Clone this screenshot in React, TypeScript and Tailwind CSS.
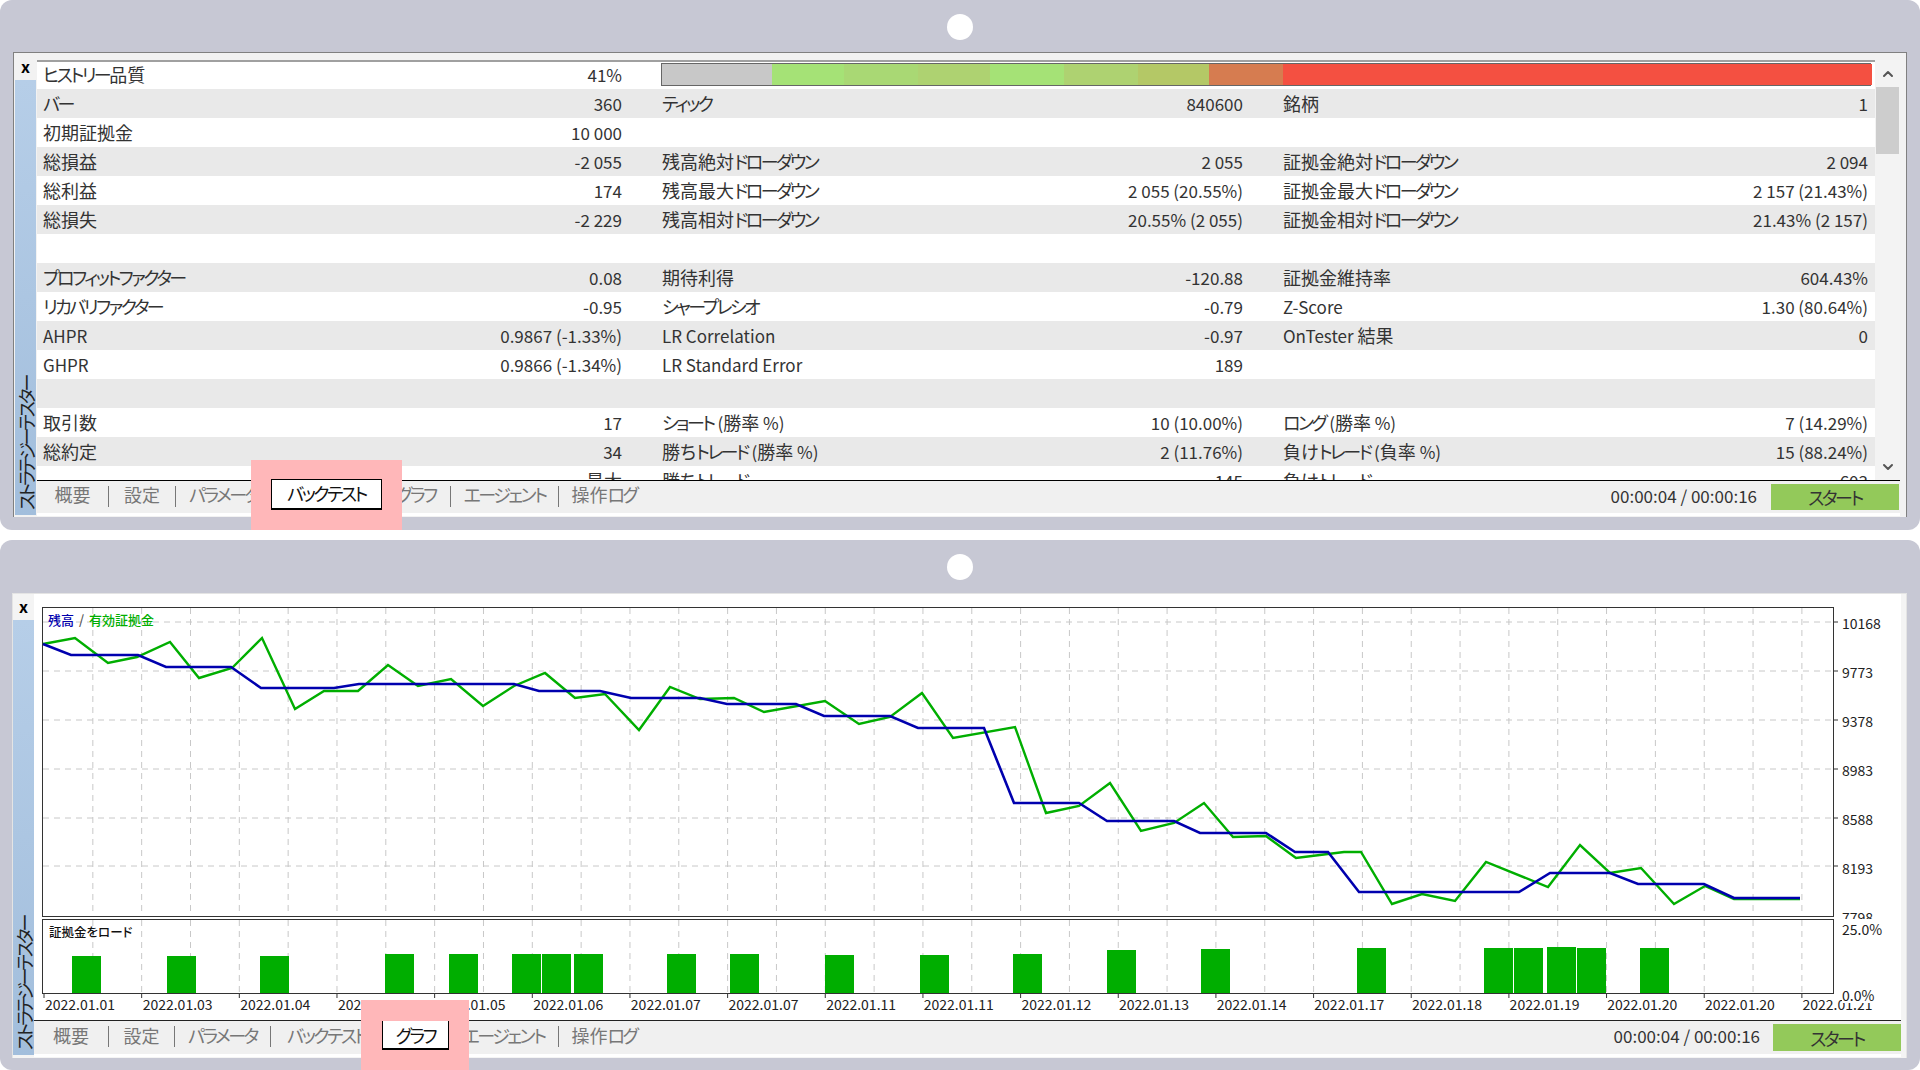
import { ChevronDown, ChevronUp } from "lucide-react";

const rows = [
  ["バー", "360", "ティック", "840600", "銘柄", "1"],
  ["初期証拠金", "10 000", "", "", "", ""],
  ["総損益", "-2 055", "残高絶対ドローダウン", "2 055", "証拠金絶対ドローダウン", "2 094"],
  ["総利益", "174", "残高最大ドローダウン", "2 055 (20.55%)", "証拠金最大ドローダウン", "2 157 (21.43%)"],
  ["総損失", "-2 229", "残高相対ドローダウン", "20.55% (2 055)", "証拠金相対ドローダウン", "21.43% (2 157)"],
  ["", "", "", "", "", ""],
  ["プロフィットファクター", "0.08", "期待利得", "-120.88", "証拠金維持率", "604.43%"],
  ["リカバリファクター", "-0.95", "シャープレシオ", "-0.79", "Z-Score", "1.30 (80.64%)"],
  ["AHPR", "0.9867 (-1.33%)", "LR Correlation", "-0.97", "OnTester 結果", "0"],
  ["GHPR", "0.9866 (-1.34%)", "LR Standard Error", "189", "", ""],
  ["", "", "", "", "", ""],
  ["取引数", "17", "ショート (勝率 %)", "10 (10.00%)", "ロング (勝率 %)", "7 (14.29%)"],
  ["総約定", "34", "勝ちトレード (勝率 %)", "2 (11.76%)", "負けトレード (負率 %)", "15 (88.24%)"],
  ["", "最大", "勝ちトレード", "145", "負けトレード", "603"],
];

const barSegments = [
  { width: 110, color: "bg-[#c8c8c8]" },
  { width: 72, color: "bg-[#a5e276]" },
  { width: 74, color: "bg-[#a9d874]" },
  { width: 72, color: "bg-[#aed271]" },
  { width: 74, color: "bg-[#a5e276]" },
  { width: 74, color: "bg-[#aed271]" },
  { width: 71, color: "bg-[#b4c866]" },
  { width: 74, color: "bg-[#d67c50]" },
  { width: 589, color: "bg-[#f45041]" },
];

const priceLabels = ["10168", "9773", "9378", "8983", "8588", "8193", "7798"];

const dates = [
  "2022.01.01", "2022.01.03", "2022.01.04", "2022.01.04", "2022.01.05", "2022.01.06", "2022.01.07",
  "2022.01.07", "2022.01.11", "2022.01.11", "2022.01.12", "2022.01.13", "2022.01.14", "2022.01.17",
  "2022.01.18", "2022.01.19", "2022.01.20", "2022.01.20", "2022.01.21",
];

const greenLine =
  "43,644 75,638 108,663 137,657 170,642 199,678 232,668 262,638 295,709 324,691 358,691 388,665 418,686 451,679 483,706 514,686 545,673 575,698 605,694 639,730 670,687 700,699 734,698 764,712 825,701 859,724 890,717 922,693 953,738 1015,727 1046,813 1079,806 1110,783 1141,831 1174,823 1204,803 1233,837 1266,836 1296,858 1344,852 1361,852 1392,904 1422,894 1455,901 1486,862 1548,887 1580,845 1610,873 1641,868 1674,904 1705,886 1734,899 1800,899";

const blueLine =
  "43,644 71,655 138,655 166,667 231,667 261,688 334,688 359,684 514,684 539,691 600,691 631,698 700,698 727,704 796,704 824,716 890,716 918,728 984,728 1014,803 1079,803 1107,821 1174,821 1200,833 1266,833 1295,852 1328,852 1359,892 1519,892 1550,873 1610,873 1638,884 1704,884 1734,898 1800,898";

const marginBars = [
  [72, 956], [167, 956], [260, 956], [385, 954], [449, 954], [512, 954], [542, 954], [574, 954],
  [667, 954], [730, 954], [825, 955], [920, 955], [1013, 954], [1107, 950], [1201, 949],
  [1357, 948], [1484, 948], [1514, 948], [1547, 947], [1577, 948], [1640, 948],
];

const gridX = Array.from({ length: 36 }, (_, i) => 44 + 48.83 * (i + 1));
const gridY = [622, 671, 720, 769, 818, 866];

// カナは細く、漢字は大きめに見えるので字種ごとに分ける
function Label({ text }: { text: string }) {
  const parts = text.split(/([\u30A0-\u30FF]+|[\u3040-\u309F\u4E00-\u9FFF]+)/).filter(Boolean);
  return (
    <span className="whitespace-nowrap">
      {parts.map((part, i) => {
        if (/[\u30A0-\u30FF]/.test(part)) {
          return (
            <span key={i} className="text-[18px] tracking-[-2.5px]">
              {part}
            </span>
          );
        }
        if (/[\u3040-\u309F\u4E00-\u9FFF]/.test(part)) {
          return (
            <span key={i} className="text-[18px]">
              {part}
            </span>
          );
        }
        return <span key={i}>{part}</span>;
      })}
    </span>
  );
}

function Sidebar() {
  return (
    <div className="flex flex-1 items-start justify-center bg-gradient-to-b from-[#b6cee8] to-[#a2bedc]">
      <div className="rotate-180 self-stretch whitespace-nowrap pt-[5px] text-[18px] leading-[20px] tracking-[-3px] text-[#222] [text-orientation:sideways] [writing-mode:vertical-rl]">
        ストラテジーテスター
      </div>
    </div>
  );
}

function Dot() {
  return (
    <div className="flex h-[52px] items-center justify-center pt-[2px]">
      <div className="h-[26px] w-[26px] rounded-full bg-white" />
    </div>
  );
}

function Pink({ className }: { className: string }) {
  return <div className={`absolute bottom-0 z-10 h-[70px] bg-[#ffb7b9] ${className}`} />;
}

function Tab({ label, width, sep = true, lift = false }: { label: string; width: string; sep?: boolean; lift?: boolean }) {
  return (
    <>
      <div className={`flex items-center justify-center text-[#777] ${lift ? "h-[26px]" : "h-[27px]"} ${width}`}>
        <Label text={label} />
      </div>
      {sep && <div className="mt-[5px] h-[21px] w-px bg-[#777]" />}
    </>
  );
}

function StatsTable() {
  return (
    <div className="h-[420px] flex-1 overflow-hidden border-t-2 border-[#a0a0a0] bg-white text-[17px] leading-[29px] text-[#333]">
      <div className="-mt-[2px] flex h-[29px] items-center pl-[6px]">
        <div className="flex w-[579px] justify-between">
          <Label text="ヒストリー品質" />
          <span>41%</span>
        </div>
        <div className="ml-[39px] flex h-[23px] w-[1210px] border border-[#666]">
          {barSegments.map((seg, i) => (
            <div key={i} className={`h-full shrink-0 ${seg.color}`} style={{ width: seg.width }} />
          ))}
        </div>
      </div>
      {rows.map((row, i) => (
        <div key={i} className={`flex h-[29px] pl-[6px] ${i % 2 === 0 ? "bg-[#e9e9e9]" : "bg-white"}`}>
          <div className="flex w-[579px] justify-between">
            <Label text={row[0]} />
            <span>{row[1] === "最大" ? <Label text="最大" /> : row[1]}</span>
          </div>
          <div className="ml-[40px] flex w-[581px] justify-between">
            <Label text={row[2]} />
            <span>{row[3]}</span>
          </div>
          <div className="ml-[40px] flex w-[585px] justify-between">
            <Label text={row[4]} />
            <span>{row[5]}</span>
          </div>
        </div>
      ))}
    </div>
  );
}

function EquityChart() {
  return (
    <div className="relative h-[310px] w-[1792px] shrink-0">
      <svg viewBox="42 607 1792 310" className="h-full w-full overflow-visible">
        <rect x="42.5" y="607.5" width="1791" height="309" fill="#fff" stroke="#333" />
        {gridX.map((x) => (
          <line key={x} x1={x} x2={x} y1="608" y2="916" stroke="#c8c8c8" strokeDasharray="6 5" />
        ))}
        {gridY.map((y) => (
          <g key={y}>
            <line x1="43" x2="1833" y1={y} y2={y} stroke="#c8c8c8" strokeDasharray="6 5" />
            <line x1="1834" x2="1838" y1={y} y2={y} stroke="#333" />
          </g>
        ))}
        <polyline points={greenLine} fill="none" stroke="#00ae00" strokeWidth="2.4" />
        <polyline points={blueLine} fill="none" stroke="#0000ae" strokeWidth="2.6" />
      </svg>
      <div className="absolute left-[6px] top-[5px] flex gap-[5px] text-[13px] font-medium leading-[16px]">
        <span className="text-[#0000ae]">残高</span>
        <span className="text-[#555]">/</span>
        <span className="text-[#00ae00]">有効証拠金</span>
      </div>
    </div>
  );
}

function MarginChart() {
  return (
    <div className="relative h-[75px] w-[1792px] shrink-0">
      <svg viewBox="42 919 1792 75" className="h-full w-full overflow-visible">
        <rect x="42.5" y="919.5" width="1791" height="74" fill="#fff" stroke="#333" />
        {gridX.map((x) => (
          <line key={x} x1={x} x2={x} y1="920" y2="993" stroke="#c8c8c8" strokeDasharray="6 5" />
        ))}
        {marginBars.map(([x, top]) => (
          <rect key={x} x={x} y={top} width="29" height={993 - top} fill="#00ae00" />
        ))}
        {gridX
          .filter((_, i) => i % 2 === 1)
          .map((x) => (
            <line key={x} x1={x} x2={x} y1="994" y2="998" stroke="#333" />
          ))}
        <line x1="44" x2="44" y1="994" y2="998" stroke="#333" />
      </svg>
      <div className="absolute left-[7px] top-[5px] text-[12.5px] font-medium leading-[16px] text-[#111]">
        証拠金をロード
      </div>
    </div>
  );
}

export default function App() {
  return (
    <div className="h-[1070px] w-[1920px] overflow-hidden bg-white font-['Noto_Sans_CJK_JP',sans-serif] [font-feature-settings:'palt']">
      {/* 上: バックテスト */}
      <div className="relative h-[530px] rounded-[12px] bg-[#c7c8d4] px-[13px]">
        <Dot />
        <div className="flex h-[465px] border border-b-0 border-[#808080] bg-[#f2f2f2]">
          <div className="flex w-[23px] flex-col px-[1px]">
            <div className="flex h-[27px] items-start justify-center text-[16px] font-bold leading-[26px]">x</div>
            <div className="mb-[2px] flex flex-1">
              <Sidebar />
            </div>
          </div>
          <div className="flex flex-1 flex-col pr-[6px]">
            <div className="flex pt-[7px]">
              <StatsTable />
              <div className="relative flex h-[420px] w-[25px] flex-col items-center justify-between bg-[#f3f3f3]">
                <div className="flex h-[27px] items-center">
                  <ChevronUp size={16} strokeWidth={3} className="text-[#555]" />
                </div>
                <div className="absolute left-[1px] top-[27px] h-[67px] w-[23px] bg-[#cdcdcd]" />
                <div className="flex h-[27px] items-center">
                  <ChevronDown size={16} strokeWidth={3} className="text-[#555]" />
                </div>
              </div>
            </div>
            <div className="flex h-[33px] border-t border-black bg-[#f0f0f0] pr-[1px] text-[17px] leading-none">
              <Tab label="概要" width="w-[71px]" lift />
              <Tab label="設定" width="w-[66px]" lift />
              <Tab label="パラメータ" width="w-[95px]" sep={false} lift />
              <div className="relative z-20 -mt-[2px] flex h-[31px] w-[111px] items-center justify-center border border-b-2 border-black bg-white pb-[2px] text-[#111]">
                <Label text="バックテスト" />
              </div>
              <Tab label="グラフ" width="w-[68px]" lift />
              <Tab label="エージェント" width="w-[107px]" lift />
              <Tab label="操作ログ" width="w-[90px]" sep={false} lift />
              <div className="ml-auto mr-[14px] flex h-[29px] items-center whitespace-nowrap text-[#333]">
                00:00:04 / 00:00:16
              </div>
              <div className="mt-[3px] flex h-[26px] w-[128px] items-center justify-center bg-[#93c95a] text-[#333]">
                <Label text="スタート" />
              </div>
            </div>
            <div className="h-[3px] bg-white" />
          </div>
        </div>
        <Pink className="left-[251px] w-[151px]" />
      </div>

      <div className="h-[10px]" />

      {/* 下: グラフ */}
      <div className="relative h-[530px] rounded-[12px] bg-[#c7c8d4] px-[12px]">
        <Dot />
        <div className="mt-[1px] flex h-[465px] w-[1895px] border border-b-0 border-[#e4e4e4] bg-[#f4f4f4]">
          <div className="flex w-[21px] flex-col">
            <div className="flex h-[26px] items-start justify-center text-[16px] font-bold leading-[25px]">x</div>
            <div className="mb-[3px] flex flex-1">
              <Sidebar />
            </div>
          </div>
          <div className="flex flex-1 flex-col pr-[5px]">
            <div className="h-[426px] bg-white pl-[8px] pt-[13px]">
              <div className="flex">
                <EquityChart />
                <div className="-mt-[8px] ml-[8px] h-[310px] text-[14px] text-[#222]">
                  {priceLabels.map((p) => (
                    <div key={p} className="flex h-[49px] items-center">
                      {p}
                    </div>
                  ))}
                </div>
              </div>
              <div className="mt-[2px] flex">
                <MarginChart />
                <div className="relative z-[1] ml-[8px] flex h-[84px] flex-col justify-between text-[14px] leading-[16px] text-[#222]">
                  <div className="bg-white pt-[2px]">25.0%</div>
                  <div className="bg-white">0.0%</div>
                </div>
              </div>
              <div className="-mt-[12px] flex pl-[3px] text-[14px] leading-[26px] text-[#222]">
                {dates.map((d, i) => (
                  <div key={i} className="w-[97.65px] shrink-0 whitespace-nowrap">
                    {d}
                  </div>
                ))}
              </div>
            </div>
            <div className="flex h-[34px] border-t border-[#222] bg-[#f0f0f0] text-[17px] leading-none">
              <Tab label="概要" width="w-[74px]" />
              <Tab label="設定" width="w-[65px]" />
              <Tab label="パラメータ" width="w-[95px]" />
              <Tab label="バックテスト" width="w-[111px]" sep={false} />
              <div className="relative z-20 flex h-[29px] w-[67px] items-center justify-center border border-t-0 border-b-2 border-black bg-white text-[#111]">
                <Label text="グラフ" />
              </div>
              <Tab label="エージェント" width="w-[109px]" />
              <Tab label="操作ログ" width="w-[90px]" sep={false} />
              <div className="ml-auto mr-[13px] flex h-[29px] items-center whitespace-nowrap text-[#333]">
                00:00:04 / 00:00:16
              </div>
              <div className="mt-[3px] flex h-[27px] w-[128px] items-center justify-center bg-[#93c95a] text-[#333]">
                <Label text="スタート" />
              </div>
            </div>
            <div className="h-[3px] bg-white" />
          </div>
        </div>
        <Pink className="left-[361px] w-[108px]" />
      </div>
    </div>
  );
}
